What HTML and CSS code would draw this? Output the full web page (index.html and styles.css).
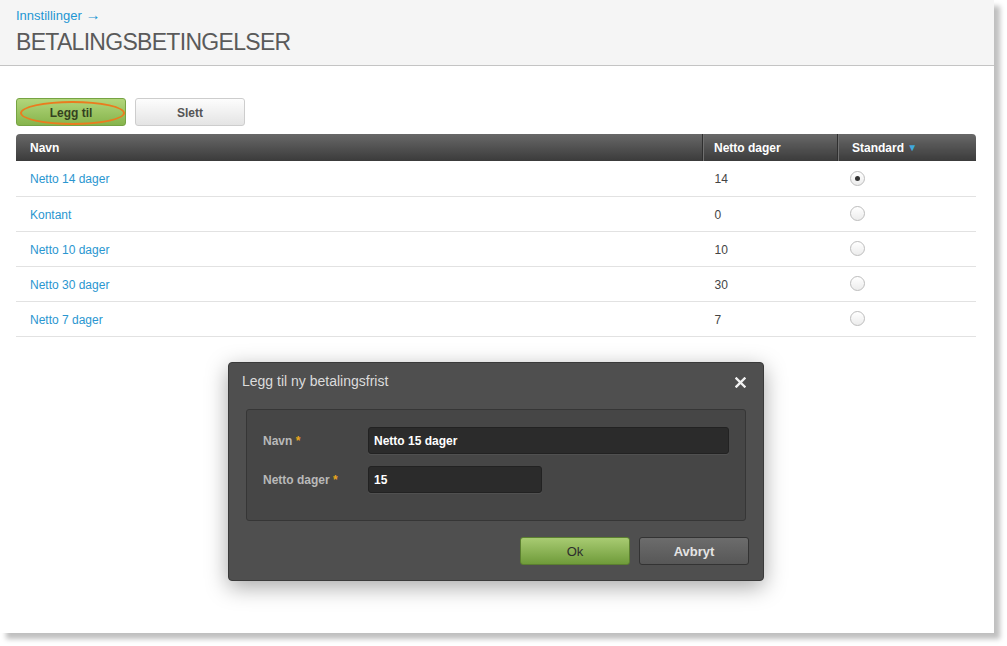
FILE: index.html
```html
<!DOCTYPE html>
<html lang="no">
<head>
    <meta charset="UTF-8">
    <title>Betalingsbetingelser</title>
    <link rel="stylesheet" href="styles.css">
</head>
<body>
    <div class="page">
        <div class="page-header">
            <a class="crumb" href="#">Innstillinger <span class="arrow">&rarr;</span></a>
            <h1>BETALINGSBETINGELSER</h1>
        </div>

        <div class="content">
            <div class="toolbar">
                <button class="btn btn-green">Legg til<span class="highlight"></span></button>
                <button class="btn btn-light">Slett</button>
            </div>

            <table class="grid">
                <thead>
                    <tr>
                        <th class="col-name">Navn</th>
                        <th class="col-days">Netto dager</th>
                        <th class="col-std">Standard <span class="sort">&#9660;</span></th>
                    </tr>
                </thead>
                <tbody>
                    <tr>
                        <td><a href="#">Netto 14 dager</a></td>
                        <td>14</td>
                        <td><span class="radio checked"></span></td>
                    </tr>
                    <tr>
                        <td><a href="#">Kontant</a></td>
                        <td>0</td>
                        <td><span class="radio"></span></td>
                    </tr>
                    <tr>
                        <td><a href="#">Netto 10 dager</a></td>
                        <td>10</td>
                        <td><span class="radio"></span></td>
                    </tr>
                    <tr>
                        <td><a href="#">Netto 30 dager</a></td>
                        <td>30</td>
                        <td><span class="radio"></span></td>
                    </tr>
                    <tr>
                        <td><a href="#">Netto 7 dager</a></td>
                        <td>7</td>
                        <td><span class="radio"></span></td>
                    </tr>
                </tbody>
            </table>
        </div>

        <div class="modal">
            <div class="modal-title">
                <span>Legg til ny betalingsfrist</span>
                <svg class="close" width="11" height="11" viewBox="0 0 11 11">
                    <path d="M1.5 1.5 L9.5 9.5 M9.5 1.5 L1.5 9.5" stroke="#f2f2f2" stroke-width="2.4" stroke-linecap="square"/>
                </svg>
            </div>
            <div class="modal-body">
                <div class="form-row">
                    <label>Navn <span class="req">*</span></label>
                    <input class="input input-wide" type="text" value="Netto 15 dager">
                </div>
                <div class="form-row">
                    <label>Netto dager <span class="req">*</span></label>
                    <input class="input input-short" type="text" value="15">
                </div>
            </div>
            <div class="modal-actions">
                <button class="btn btn-ok">Ok</button>
                <button class="btn btn-dark">Avbryt</button>
            </div>
        </div>
    </div>
</body>
</html>
```

FILE: styles.css
```css
body {
    margin: 0;
    min-height: 646px;
    background: #fff;
    font-family: "Liberation Sans", Arial, sans-serif;
    font-size: 12px;
    color: #444;
}

.page {
    position: relative;
    width: 994px;
    height: 633px;
    background: #fff;
    box-shadow: 6px 6px 5px rgba(0,0,0,0.25);
}

.page-header {
    height: 65px;
    background: #f5f5f5;
    border-bottom: 1px solid #c4c4c4;
    padding-left: 16px;
}

.crumb {
    display: block;
    padding-top: 8px;
    font-size: 13px;
    line-height: 16px;
    color: #1e96d3;
    text-decoration: none;
}

.crumb .arrow {
    font-size: 15px;
    line-height: 14px;
}

h1 {
    margin: 4px 0 0;
    font-family: "Liberation Sans", Arial, sans-serif;
    font-weight: normal;
    font-size: 23px;
    line-height: 28px;
    color: #5a5a5a;
    letter-spacing: -0.7px;
}

.content {
    width: 960px;
    margin-left: 16px;
}

.toolbar {
    display: flex;
    gap: 9px;
    margin-top: 32px;
    margin-bottom: 8px;
}

.btn {
    position: relative;
    width: 110px;
    height: 28px;
    border-radius: 3px;
    font-family: "Liberation Sans", Arial, sans-serif;
    font-size: 12px;
    font-weight: bold;
    cursor: pointer;
    padding: 0;
}

.btn-green {
    background: linear-gradient(#b2d67b, #86b44c);
    border: 1px solid #76a343;
    color: #34411f;
    padding-top: 1px;
}

.btn-light {
    background: linear-gradient(#fdfdfd, #e4e4e4);
    border: 1px solid #cdcdcd;
    color: #555;
    padding-top: 1px;
}

.highlight {
    position: absolute;
    left: 3px;
    top: 2px;
    width: 101px;
    height: 20px;
    border: 2px solid #ea7c1f;
    border-radius: 50%;
}

.grid {
    width: 960px;
    border-collapse: collapse;
}

.grid th {
    height: 27px;
    padding: 0 0 0 14px;
    text-align: left;
    font-size: 12px;
    color: #fff;
    background: linear-gradient(#686868, #3b3b3b);
    border-left: 1px solid #2f2f2f;
    box-shadow: inset 1px 0 0 #707070;
}

.grid th:first-child {
    border-left: none;
    box-shadow: none;
    border-top-left-radius: 4px;
}

.grid th:last-child {
    border-top-right-radius: 4px;
}

.col-name {
    width: 672px;
}

.col-days {
    width: 123px;
}

.grid th.col-days {
    padding-left: 11px;
}

.sort {
    color: #3fa8dc;
    font-size: 10px;
    vertical-align: 1px;
}

.grid td {
    height: 35px;
    padding: 2px 0 0 14px;
    box-sizing: border-box;
    border-bottom: 1px solid #e2e2e2;
    color: #444;
}

.grid td:nth-child(2) {
    padding-left: 12px;
}

.grid td a {
    color: #2a96d0;
    text-decoration: none;
}

.radio {
    display: block;
    width: 13px;
    height: 13px;
    margin: -2px 0 0 -2px;
    border: 1px solid #bdbdbd;
    border-radius: 50%;
    background: linear-gradient(#fff, #ececec);
    position: relative;
}

.radio.checked::after {
    content: "";
    position: absolute;
    left: 4px;
    top: 4px;
    width: 5px;
    height: 5px;
    border-radius: 50%;
    background: #333;
}

/* dialog over the list */
.modal {
    position: absolute;
    left: 228px;
    top: 362px;
    width: 534px;
    height: 217px;
    background: #4f4f4f;
    border: 1px solid #3a3a3a;
    border-radius: 4px;
    box-shadow: 0 6px 22px rgba(0,0,0,0.35);
}

.modal-title {
    display: flex;
    align-items: center;
    justify-content: space-between;
    height: 36px;
    padding: 0 17px 0 13px;
    font-size: 14px;
    color: #dcdcdc;
}

.close {
    margin-top: 2px;
}

.modal-body {
    margin: 10px 17px 0;
    padding: 17px 16px 0 16px;
    box-sizing: border-box;
    background: #464646;
    border: 1px solid #363636;
    border-radius: 3px;
    height: 112px;
}

.form-row {
    display: flex;
    align-items: center;
    margin-bottom: 12px;
}

.form-row label {
    width: 105px;
    font-weight: bold;
    color: #b9b9b9;
}

.req {
    color: #e9a51c;
}

.input {
    height: 27px;
    box-sizing: border-box;
    padding: 0 5px;
    background: #2b2b2b;
    border: 1px solid #222;
    border-radius: 3px;
    box-shadow: 0 1px 0 rgba(255,255,255,0.06);
    color: #fff;
    font-family: "Liberation Sans", Arial, sans-serif;
    font-size: 12px;
    font-weight: bold;
    outline: none;
}

.input-wide {
    width: 361px;
}

.input-short {
    width: 174px;
}

.modal-actions {
    display: flex;
    justify-content: flex-end;
    gap: 9px;
    margin: 16px 14px 0 0;
}

.btn-ok {
    background: linear-gradient(#a8cb72, #6f9b3a);
    border: 1px solid #5b7f30;
    color: #2d2d2d;
    font-weight: normal;
    font-size: 13px;
}

.btn-dark {
    background: linear-gradient(#6c6c6c, #575757);
    border: 1px solid #333;
    color: #e4e4e4;
    font-size: 13px;
}
```
